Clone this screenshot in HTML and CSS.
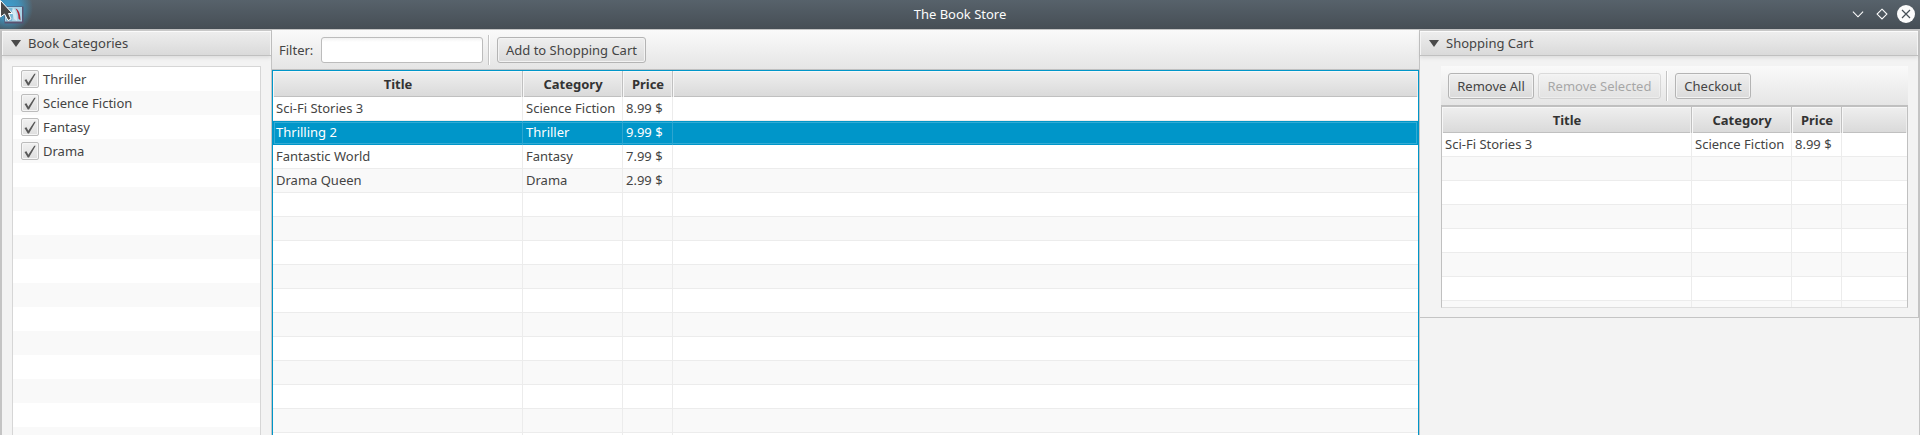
FILE: index.html
```html
<!DOCTYPE html>
<html lang="en">
<head>
<meta charset="utf-8">
<title>The Book Store</title>
<link rel="stylesheet" href="styles.css">
</head>
<body>
<div class="window">
  <header class="titlebar">
    <svg class="app-icon" width="30" height="29" viewBox="0 0 30 29">
      <rect x="4.500" y="6.500" width="19" height="17" fill="#5a5270"/>
      <rect x="5" y="7" width="17" height="14.500" fill="#a9d3e6"/>
      <path d="M6 8h6l2 3-2 10H6z" fill="#79b9d6"/>
      <path d="M13 8c3 2 4 7 4 13l-3-2-2-8z" fill="#d3e9f2"/>
      <path d="M15.500 8.500c3 1 5 5 5 12l-2-2c0-4-1-7-3-10z" fill="#b02838"/>
      <path d="M.500.500V17l4-3 3.500 6.500 3-1.500-2.500-5.500H12.500z" fill="#484848" stroke="#fff" stroke-width="1"/>
    </svg>
    <span class="window-title">The Book Store</span>
    <svg class="window-buttons" width="68" height="29" viewBox="0 0 68 29">
      <path d="M.900 11.700 6 16.800l5.100-5.100M30 9.200l4.900 4.900L30 19l-4.900-4.900z" fill="none" stroke="#fcfcfc" stroke-width="1.100"/>
      <circle cx="54" cy="14" r="9" fill="#fcfcfc"/>
      <path d="M50 10l8 8M58 10l-8 8" stroke="#475057" stroke-width="1.200"/>
    </svg>
  </header>
  <main class="content">
    <section class="categories">
      <h2 class="pane-title"><span class="arrow"></span>Book Categories</h2>
      <ul class="list">
        <li><span class="check"><svg width="12" height="13" viewBox="0 0 12 13"><path d="M.500 7 2.500 6.200 4.300 9.800 10.300.800h1.400L5 12.500H3.800z"/></svg></span>Thriller</li>
        <li><span class="check"><svg width="12" height="13" viewBox="0 0 12 13"><path d="M.500 7 2.500 6.200 4.300 9.800 10.300.800h1.400L5 12.500H3.800z"/></svg></span>Science Fiction</li>
        <li><span class="check"><svg width="12" height="13" viewBox="0 0 12 13"><path d="M.500 7 2.500 6.200 4.300 9.800 10.300.800h1.400L5 12.500H3.800z"/></svg></span>Fantasy</li>
        <li><span class="check"><svg width="12" height="13" viewBox="0 0 12 13"><path d="M.500 7 2.500 6.200 4.300 9.800 10.300.800h1.400L5 12.500H3.800z"/></svg></span>Drama</li>
      </ul>
    </section>
    <section class="books">
      <div class="toolbar">
        <label class="filter-label" for="filter">Filter:</label>
        <input class="filter" id="filter" type="text">
        <span class="separator"></span>
        <button class="button add">Add to Shopping Cart</button>
      </div>
      <div class="table focused">
        <div class="row head"><span>Title</span><span>Category</span><span>Price</span><span></span></div>
        <div class="rows">
          <div class="row"><span>Sci-Fi Stories 3</span><span>Science Fiction</span><span>8.99 $</span><span></span></div>
          <div class="row selected"><span>Thrilling 2</span><span>Thriller</span><span>9.99 $</span><span></span></div>
          <div class="row"><span>Fantastic World</span><span>Fantasy</span><span>7.99 $</span><span></span></div>
          <div class="row"><span>Drama Queen</span><span>Drama</span><span>2.99 $</span><span></span></div>
        </div>
      </div>
    </section>
    <aside class="side">
      <div class="cart">
        <h2 class="pane-title"><span class="arrow"></span>Shopping Cart</h2>
        <div class="cart-body">
          <div class="toolbar">
            <button class="button remove-all">Remove All</button>
            <button class="button remove-selected" disabled>Remove Selected</button>
            <span class="separator"></span>
            <button class="button checkout">Checkout</button>
          </div>
          <div class="table">
            <div class="row head"><span>Title</span><span>Category</span><span>Price</span><span></span></div>
            <div class="rows">
              <div class="row"><span>Sci-Fi Stories 3</span><span>Science Fiction</span><span>8.99 $</span><span></span></div>
            </div>
          </div>
        </div>
      </div>
    </aside>
  </main>
</div>
</body>
</html>
```
FILE: styles.css
```css
* { box-sizing: border-box; }
body { margin: 0; font: 13px/18px "Noto Sans", sans-serif; color: #444; }
.window { height: 435px; display: flex; flex-direction: column; overflow: hidden; background: #f3f3f3; }
.titlebar {
  height: 29px; flex: none; display: grid; grid-template-columns: 120px 1fr 120px; align-items: center;
  background: radial-gradient(circle at 8px 8px, #3c9fd0 0, rgba(60,159,208,.75) 12px, rgba(60,159,208,0) 25px), linear-gradient(#57626b, #464e55);
  color: #fcfcfc;
}
.app-icon { display: block; }
.window-title { text-align: center; padding-bottom: 2px; }
.window-buttons { justify-self: end; display: block; }
.content { flex: 1; min-height: 0; display: grid; grid-template-columns: 272px 1147px 501px; border-top: 1px solid #c4c4c4; }

.pane-title {
  margin: 0; height: 26px; display: flex; align-items: center; font: inherit;
  padding: 1px 0 0 9px; background: linear-gradient(#efefef, #dadada);
  border-bottom: 1px solid #c0c0c0; box-shadow: inset 0 1px #c8c8c8, inset 0 2px #fbfbfb, inset 1px 0 #f4f4f4, inset -1px 0 #f4f4f4, 0 2px 4px rgba(0,0,0,.09);
}
.arrow { width: 0; height: 0; border: 5px solid transparent; border-top: 7px solid #4a4a4a; border-bottom: 0; margin-right: 7px; }

.categories { display: flex; flex-direction: column; min-height: 0; border-left: 2px solid #c4c4c4; border-right: 1px solid #c4c4c4; }
.list {
  flex: 1; list-style: none; margin: 10px 10px 0; padding: 0; border: 1px solid #d6d6d6; border-bottom: 0;
  background: repeating-linear-gradient(#fff 0 24px, #f9f9f9 24px 48px);
}
.list li { height: 24px; display: flex; align-items: center; padding-left: 8px; gap: 4px; }
.check {
  width: 18px; height: 18px; display: grid; place-items: center; border: 1px solid #bcbcbc; border-radius: 2px;
  background: linear-gradient(#f1f1f1, #dedede); box-shadow: inset 0 0 0 1px #f5f5f5;
}
.check path { fill: #585858; }

.books { display: flex; flex-direction: column; min-height: 0; }
.toolbar { height: 40px; flex: none; display: flex; align-items: center; padding: 0 7px; background: linear-gradient(#fafafa, #e5e5e5); border-bottom: 1px solid #bfbfbf; }
.filter-label { width: 42px; }
.filter { width: 162px; height: 26px; border: 1px solid #bcbcbc; border-radius: 3px; background: linear-gradient(#f2f2f2, #fff 4px); padding: 0; margin: 0; }
.separator { width: 2px; height: 30px; margin: 0 7px 0 5px; border-left: 1px solid #c4c4c4; background: #fff; }
.button {
  height: 26px; padding: 0; margin: 0; border: 1px solid #b4b4b4; border-radius: 3px; font: inherit; color: inherit; white-space: nowrap;
  background: linear-gradient(#efefef, #dadada); box-shadow: inset 0 0 0 1px #f3f3f3;
}
.button:disabled { opacity: .42; }
.add { width: 149px; }
.remove-all { width: 86px; margin-right: 4px; }
.remove-selected { width: 123px; }
.checkout { width: 76px; }

.table { flex: 1; min-height: 0; display: flex; flex-direction: column; border: 1px solid #c0c0c0; background: #fff; }
.focused { border-color: #0096c9; border-bottom: 0; }
.row { height: 24px; display: grid; grid-template-columns: 250px 100px 50px 1fr; line-height: 23px; }
.row span { padding-left: 3px; border-right: 1px solid #ececec; white-space: nowrap; }
.row span:last-child { border-right: 0; }
.head { height: 26px; flex: none; line-height: 27px; font-weight: bold; text-align: center; color: #333; border-bottom: 1px solid #c0c0c0; background: linear-gradient(#efefef, #dadada); }
.head span { padding: 0 0 0 1px; border-right-color: #c0c0c0; box-shadow: inset 1px 1px #f7f7f7, inset -1px 0 #eee; }
.rows {
  flex: 1; min-height: 0;
  background:
    linear-gradient(#ececec, #ececec) 249px 0 / 1px 100% no-repeat,
    linear-gradient(#ececec, #ececec) 349px 0 / 1px 100% no-repeat,
    linear-gradient(#ececec, #ececec) 399px 0 / 1px 100% no-repeat,
    repeating-linear-gradient(#fff 0 23px, #ececec 23px 24px, #f9f9f9 24px 47px, #ececec 47px 48px);
}
.selected { background: #0096c9; color: #fff; box-shadow: inset 0 0 0 1px #0096c9, inset 0 0 0 2px #33abd4; }
.selected span { border-right-color: #2da5d0; }

.side { border-left: 1px solid #c4c4c4; border-right: 1px solid #c4c4c4; }
.cart { height: 288px; border-right: 1px solid #c4c4c4; border-bottom: 1px solid #c4c4c4; }
.cart-body { margin: 10px 10px 0 21px; height: 242px; display: flex; flex-direction: column; }
.cart .table { border-bottom-color: #dedede; }
```
